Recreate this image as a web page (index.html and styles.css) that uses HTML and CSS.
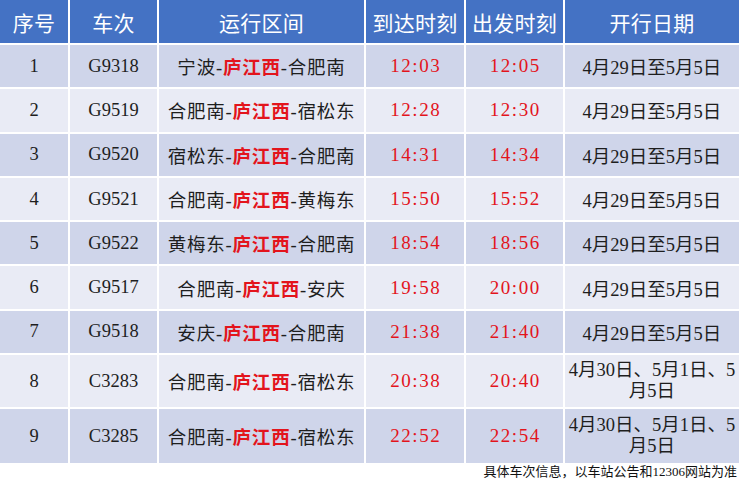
FILE: index.html
```html
<!DOCTYPE html>
<html lang="zh-CN">
<head>
<meta charset="utf-8">
<title>庐江西站列车时刻</title>
<link rel="stylesheet" href="styles.css">
</head>
<body>
<div class="sheet">
  <div class="table">
    <div class="row head">
      <div class="cell">序号</div>
      <div class="cell">车次</div>
      <div class="cell">运行区间</div>
      <div class="cell">到达时刻</div>
      <div class="cell">出发时刻</div>
      <div class="cell">开行日期</div>
    </div>
    <div class="row dark">
      <div class="cell">1</div>
      <div class="cell">G9318</div>
      <div class="cell route">宁波-<b class="hl">庐江西</b>-合肥南</div>
      <div class="cell time">12:03</div>
      <div class="cell time">12:05</div>
      <div class="cell">4月29日至5月5日</div>
    </div>
    <div class="row light">
      <div class="cell">2</div>
      <div class="cell">G9519</div>
      <div class="cell route">合肥南-<b class="hl">庐江西</b>-宿松东</div>
      <div class="cell time">12:28</div>
      <div class="cell time">12:30</div>
      <div class="cell">4月29日至5月5日</div>
    </div>
    <div class="row dark">
      <div class="cell">3</div>
      <div class="cell">G9520</div>
      <div class="cell route">宿松东-<b class="hl">庐江西</b>-合肥南</div>
      <div class="cell time">14:31</div>
      <div class="cell time">14:34</div>
      <div class="cell">4月29日至5月5日</div>
    </div>
    <div class="row light">
      <div class="cell">4</div>
      <div class="cell">G9521</div>
      <div class="cell route">合肥南-<b class="hl">庐江西</b>-黄梅东</div>
      <div class="cell time">15:50</div>
      <div class="cell time">15:52</div>
      <div class="cell">4月29日至5月5日</div>
    </div>
    <div class="row dark">
      <div class="cell">5</div>
      <div class="cell">G9522</div>
      <div class="cell route">黄梅东-<b class="hl">庐江西</b>-合肥南</div>
      <div class="cell time">18:54</div>
      <div class="cell time">18:56</div>
      <div class="cell">4月29日至5月5日</div>
    </div>
    <div class="row light">
      <div class="cell">6</div>
      <div class="cell">G9517</div>
      <div class="cell route">合肥南-<b class="hl">庐江西</b>-安庆</div>
      <div class="cell time">19:58</div>
      <div class="cell time">20:00</div>
      <div class="cell">4月29日至5月5日</div>
    </div>
    <div class="row dark">
      <div class="cell">7</div>
      <div class="cell">G9518</div>
      <div class="cell route">安庆-<b class="hl">庐江西</b>-合肥南</div>
      <div class="cell time">21:38</div>
      <div class="cell time">21:40</div>
      <div class="cell">4月29日至5月5日</div>
    </div>
    <div class="row light tall">
      <div class="cell">8</div>
      <div class="cell">C3283</div>
      <div class="cell route">合肥南-<b class="hl">庐江西</b>-宿松东</div>
      <div class="cell time">20:38</div>
      <div class="cell time">20:40</div>
      <div class="cell"><span class="lines">4月30日、5月1日、5<br>月5日</span></div>
    </div>
    <div class="row dark taller">
      <div class="cell">9</div>
      <div class="cell">C3285</div>
      <div class="cell route">合肥南-<b class="hl">庐江西</b>-宿松东</div>
      <div class="cell time">22:52</div>
      <div class="cell time">22:54</div>
      <div class="cell"><span class="lines">4月30日、5月1日、5<br>月5日</span></div>
    </div>
  </div>
  <p class="note">具体车次信息，以车站公告和12306网站为准</p>
</div>
</body>
</html>
```

FILE: styles.css
```css
html, body {
  margin: 0;
  padding: 0;
  background: #ffffff;
}

.sheet {
  width: 739px;
  height: 500px;
  overflow: hidden;
  font-family: "Liberation Serif", "Noto Sans CJK SC", serif;
  color: #1e1e1e;
}

.table {
  display: flex;
  flex-direction: column;
  gap: 2px;
}

.row {
  display: grid;
  grid-template-columns: 68px 87px 205px 98px 97px 1fr;
  column-gap: 2px;
  height: 42.3px;
}

.row.head {
  height: 43px;
}

.row.tall {
  height: 52px;
}

.row.taller {
  height: 54px;
}

.cell {
  display: flex;
  align-items: center;
  justify-content: center;
  text-align: center;
  font-size: 18.5px;
  white-space: nowrap;
}

.route {
  letter-spacing: 0.8px;
}

.head .cell {
  background: #4472c4;
  color: #ffffff;
  font-family: "Noto Sans CJK SC", sans-serif;
  font-size: 21px;
  letter-spacing: 0.3px;
}

.dark .cell {
  background: #cfd5ea;
}

.light .cell {
  background: #e9ebf5;
}

.hl {
  color: #e3141c;
  font-weight: bold;
}

.time {
  color: #e3141c;
  font-size: 19px;
  letter-spacing: 1.6px;
  padding-left: 1.6px;
}

.lines {
  display: block;
  line-height: 21px;
}

.note {
  margin: 1px 2px 0 0;
  text-align: right;
  font-size: 13px;
  line-height: 16px;
  color: #111111;
}
```
